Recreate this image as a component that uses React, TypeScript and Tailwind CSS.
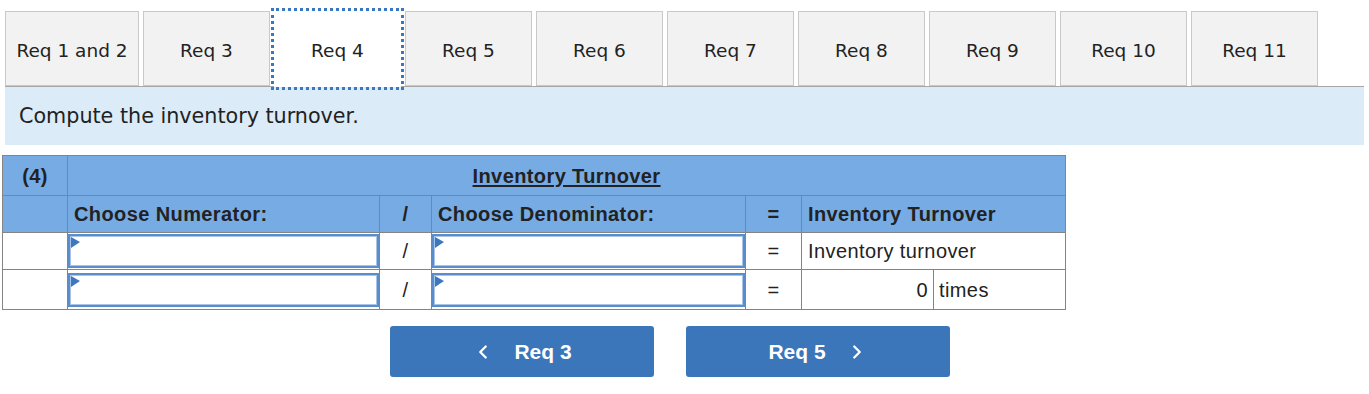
import React from 'react';
import { ChevronLeft, ChevronRight } from 'lucide-react';

const tabs = ['Req 1 and 2', 'Req 3', 'Req 4', 'Req 5', 'Req 6', 'Req 7', 'Req 8', 'Req 9', 'Req 10', 'Req 11'];

function Flag() {
  return (
    <svg className="absolute left-[1px] top-[1px]" width="9" height="11" viewBox="0 0 9 11">
      <polygon points="0,0 9,5 0,11" fill="#3c78c0" />
    </svg>
  );
}

function DropInput() {
  return (
    <div className="relative h-[34px] w-full border-2 border-[#5a8dcb] bg-white shadow-[inset_0_0_0_1px_#a9c4e6]">
      <Flag />
    </div>
  );
}

export default function App() {
  const cell = 'border border-[#848484]';
  return (
    <div className="w-[1369px] h-[394px] bg-white text-[#222]">
      {/* tabs */}
      <div className="pl-[5px] pt-[11px] pr-[5px]">
        <div className="flex gap-[4px] border-b border-[#a6a6a6]" style={{ fontFamily: '"DejaVu Sans", Verdana, sans-serif' }}>
          {tabs.map((t, i) => (
            <div
              key={t}
              className={
                i === 2
                  ? 'relative z-10 -mb-px flex h-[76px] w-[127px] items-center justify-center bg-white pt-[4px] text-[18.5px] outline-[3px] outline-dotted outline-[#3a77c2]'
                  : `flex h-[75px] ${i === 0 ? 'w-[134px]' : 'w-[127px]'} items-center justify-center border border-[#c9c9c9] bg-[#f2f2f2] pt-[4px] text-[18.5px]`
              }
            >
              {t}
            </div>
          ))}
        </div>
        <div
          className="flex h-[58px] items-center bg-[#dbebf8] pl-[14px] pt-[2px] text-[20.7px]"
          style={{ fontFamily: '"DejaVu Sans", Verdana, sans-serif' }}
        >
          Compute the inventory turnover.
        </div>
      </div>

      {/* table */}
      <div className="pl-[2px] pt-[10px]" style={{ fontFamily: '"Liberation Sans", Arial, sans-serif' }}>
        <table className="w-[1064px] table-fixed border-collapse text-[20px] tracking-[0.4px]">
          <colgroup>
            <col className="w-[65px]" />
            <col className="w-[312px]" />
            <col className="w-[52px]" />
            <col className="w-[314px]" />
            <col className="w-[56px]" />
            <col className="w-[132px]" />
            <col className="w-[132px]" />
          </colgroup>
          <tbody>
            <tr className="h-[40px] bg-[#77abe4] font-bold">
              <td className={`${cell} text-center`}>(4)</td>
              <td className={`${cell} text-center`} colSpan={6}>
                <span className="underline underline-offset-2">Inventory Turnover</span>
              </td>
            </tr>
            <tr className="h-[37px] bg-[#77abe4] font-bold">
              <td className={cell}></td>
              <td className={`${cell} px-[6px]`}>Choose Numerator:</td>
              <td className={`${cell} text-center`}>/</td>
              <td className={`${cell} px-[6px]`}>Choose Denominator:</td>
              <td className={`${cell} text-center`}>=</td>
              <td className={`${cell} px-[6px]`} colSpan={2}>Inventory Turnover</td>
            </tr>
            <tr className="h-[37px]">
              <td className={cell}></td>
              <td className={`${cell} p-0 align-middle`}><DropInput /></td>
              <td className={`${cell} text-center`}>/</td>
              <td className={`${cell} p-0 align-middle`}><DropInput /></td>
              <td className={`${cell} text-center`}>=</td>
              <td className={`${cell} px-[6px]`} colSpan={2}>Inventory turnover</td>
            </tr>
            <tr className="h-[40px]">
              <td className={cell}></td>
              <td className={`${cell} p-0 align-middle`}><DropInput /></td>
              <td className={`${cell} text-center`}>/</td>
              <td className={`${cell} p-0 align-middle`}><DropInput /></td>
              <td className={`${cell} text-center`}>=</td>
              <td className={`${cell} px-[5px] text-right`}>0</td>
              <td className={`${cell} px-[5px]`}>times</td>
            </tr>
          </tbody>
        </table>
      </div>

      {/* nav buttons */}
      <div className="flex gap-[32px] pl-[390px] pt-[16px]" style={{ fontFamily: '"Liberation Sans", Arial, sans-serif' }}>
        <button className="flex h-[51px] w-[264px] items-center justify-center gap-[20px] rounded-[3px] bg-[#3a76b9] text-[21px] font-bold text-white">
          <ChevronLeft className="h-[22px] w-[22px]" strokeWidth={2.5} />
          <span>Req 3</span>
        </button>
        <button className="flex h-[51px] w-[264px] items-center justify-center gap-[20px] rounded-[3px] bg-[#3a76b9] text-[21px] font-bold text-white">
          <span>Req 5</span>
          <ChevronRight className="h-[22px] w-[22px]" strokeWidth={2.5} />
        </button>
      </div>
    </div>
  );
}
